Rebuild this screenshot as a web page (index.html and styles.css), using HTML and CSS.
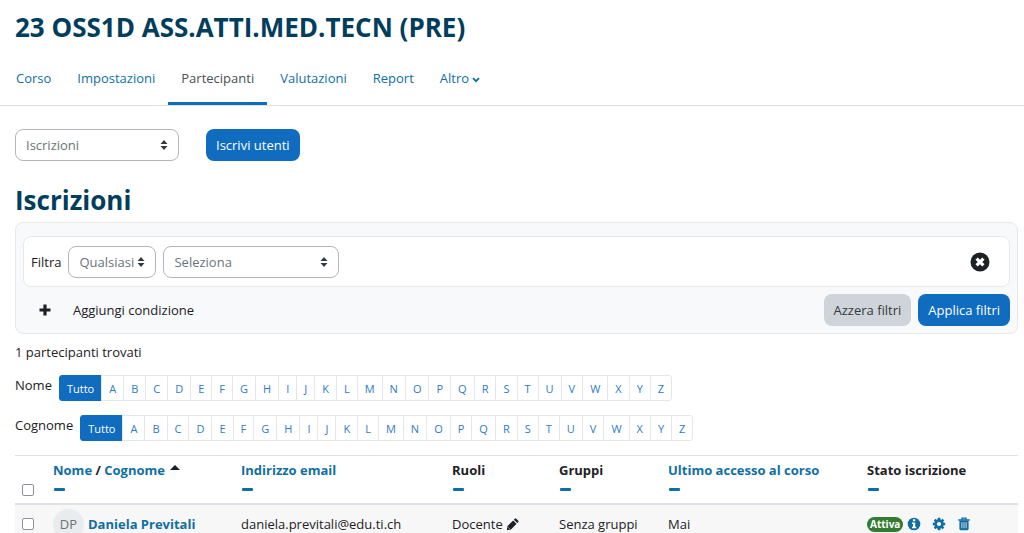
FILE: index.html
```html
<!DOCTYPE html>
<html lang="it">
<head>
    <meta charset="UTF-8">
    <meta name="viewport" content="width=device-width, initial-scale=1.0">
    <title>23 OSS1D ASS.ATTI.MED.TECN (PRE)</title>
    <link rel="stylesheet" href="styles.css">
</head>
<body>
    <header class="page-header">
        <h1>23 OSS1D ASS.ATTI.MED.TECN (PRE)</h1>
    </header>

    <nav class="tabs">
        <a href="#">Corso</a>
        <a href="#">Impostazioni</a>
        <a href="#" class="active">Partecipanti</a>
        <a href="#">Valutazioni</a>
        <a href="#">Report</a>
        <a href="#">Altro <svg class="caret" viewBox="0 0 8 6"><path d="M1 1.2l3 3 3-3" fill="none" stroke="currentColor" stroke-width="1.8"/></svg></a>
    </nav>

    <main>
        <div class="toolbar">
            <select class="select select-page" aria-label="Navigazione partecipanti">
                <option>Iscrizioni</option>
            </select>
            <button type="button" class="btn btn-primary">Iscrivi utenti</button>
        </div>

        <h2>Iscrizioni</h2>

        <form class="filters">
            <div class="filter-row">
                <label for="filter-match">Filtra</label>
                <select class="select select-match" id="filter-match">
                    <option>Qualsiasi</option>
                </select>
                <select class="select select-type" aria-label="Tipo di filtro">
                    <option>Seleziona</option>
                </select>
                <button type="button" class="icon-btn remove" aria-label="Rimuovi filtro">
                    <svg viewBox="0 0 20 20"><circle cx="10" cy="10" r="9.5" fill="#1d2125"/><path d="M6.6 6.6l6.8 6.8M13.4 6.6l-6.8 6.8" stroke="#fff" stroke-width="3.2"/></svg>
                </button>
            </div>
            <div class="filter-actions">
                <button type="button" class="icon-btn add">
                    <svg viewBox="0 0 12 12"><path d="M6 .5v11M.5 6h11" stroke="#1d2125" stroke-width="3.2"/></svg>
                    Aggiungi condizione
                </button>
                <button type="reset" class="btn btn-secondary">Azzera filtri</button>
                <button type="button" class="btn btn-primary">Applica filtri</button>
            </div>
        </form>

        <p class="count">1 partecipanti trovati</p>

        <div class="initials">
            <span>Nome</span>
            <div class="letters"></div>
        </div>
        <div class="initials">
            <span>Cognome</span>
            <div class="letters"></div>
        </div>

        <table>
            <colgroup>
                <col class="col-check">
                <col class="col-name">
                <col>
                <col class="col-roles">
                <col class="col-groups">
                <col class="col-access">
                <col class="col-status">
            </colgroup>
            <thead>
                <tr>
                    <th class="check"><input type="checkbox" aria-label="Seleziona tutti"></th>
                    <th><a href="#">Nome</a> / <a href="#">Cognome</a> <svg class="sort" viewBox="0 0 10 5"><path d="M0 5l5-5 5 5z" fill="#1d2125"/></svg><a href="#" class="hide" aria-label="Nascondi Nome"></a></th>
                    <th><a href="#">Indirizzo email</a><a href="#" class="hide" aria-label="Nascondi Indirizzo email"></a></th>
                    <th>Ruoli<a href="#" class="hide" aria-label="Nascondi Ruoli"></a></th>
                    <th>Gruppi<a href="#" class="hide" aria-label="Nascondi Gruppi"></a></th>
                    <th><a href="#">Ultimo accesso al corso</a><a href="#" class="hide" aria-label="Nascondi Ultimo accesso"></a></th>
                    <th>Stato iscrizione<a href="#" class="hide" aria-label="Nascondi Stato iscrizione"></a></th>
                </tr>
            </thead>
            <tbody>
                <tr>
                    <td class="check"><input type="checkbox" aria-label="Seleziona Daniela Previtali"></td>
                    <td><a href="#" class="user"><span class="avatar">DP</span>Daniela Previtali</a></td>
                    <td>daniela.previtali@edu.ti.ch</td>
                    <td>Docente <svg class="pencil" viewBox="0 0 14 14"><path d="M.8 13.2l.9-4.600 6-6 3.700 3.700-6 6z" fill="#1d2125"/><path d="M8.500 1.800l1-1c.5-.5 1.100-.5 1.600 0l2.100 2.100c.5.5.5 1.100 0 1.600l-1 1z" fill="#1d2125"/><path d="M2.600 10.200l1.200 1.200" stroke="#f7f7f7" stroke-width=".9"/></svg></td>
                    <td>Senza gruppi</td>
                    <td>Mai</td>
                    <td>
                        <div class="status">
                            <span class="badge">Attiva</span>
                            <a href="#" aria-label="Dettagli iscrizione"><svg viewBox="0 0 14 14"><circle cx="7" cy="7" r="6.300" fill="#0f6fa3"/><path d="M5.900 2.300h2.300v2H5.900zM5 5.500h3.200v4.300h1v1.500H5V9.800h1V7H5z" fill="#fff"/></svg></a>
                            <a href="#" aria-label="Modifica iscrizione"><svg viewBox="0 0 14 14"><circle cx="7" cy="7" r="4.800" fill="#0f6fa3"/><path d="M7 .8v12.400M.8 7h12.400M2.600 2.600l8.800 8.800M11.400 2.600l-8.800 8.800" stroke="#0f6fa3" stroke-width="2.600"/><circle cx="7" cy="7" r="2.100" fill="#f7f7f7"/></svg></a>
                            <a href="#" aria-label="Disiscrivi"><svg viewBox="0 0 14 14"><path d="M5 2.500V1.200h4v1.300M1.300 3h11.400" fill="none" stroke="#0f6fa3" stroke-width="1.300"/><path d="M2.400 3.500h9.200v8.300c0 .9-.5 1.400-1.200 1.400H3.600c-.7 0-1.200-.5-1.200-1.400z" fill="#0f6fa3"/><path d="M4.900 5.200v6M7 5.200v6M9.100 5.200v6" stroke="#f7f7f7" stroke-width=".8"/></svg></a>
                        </div>
                    </td>
                </tr>
            </tbody>
        </table>
    </main>

    <script>
        // Fill both initials bars
        const letters = 'ABCDEFGHIJKLMNOPQRSTUVWXYZ'.split('');

        document.querySelectorAll('.letters').forEach(bar => {
            bar.innerHTML = '<a href="#" class="active">Tutto</a>' +
                letters.map(letter => `<a href="#">${letter}</a>`).join('');
        });
    </script>
</body>
</html>
```
FILE: styles.css
```css
* {
    box-sizing: border-box;
}
body {
    font-family: 'Open Sans', 'Noto Sans', sans-serif;
    font-size: 13px;
    line-height: 20px;
    color: #1d2125;
    background: #fff;
    margin: 0;
}
a {
    color: #0f6fa3;
    text-decoration: none;
}
h1,
h2 {
    color: #003e5c;
    font-size: 26px;
    font-weight: 700;
    line-height: 32px;
    margin: 0;
}
.page-header {
    padding: 11px 15px 8px;
}
.tabs {
    display: flex;
    padding: 0 3px;
    border-bottom: 1px solid #dee2e6;
}
.tabs a {
    padding: 17px 13px 14px;
    border-bottom: 3px solid transparent;
}
.tabs .active {
    color: #495057;
    border-bottom-color: #0f6cbf;
}
.caret {
    width: 8px;
    height: 6px;
    vertical-align: middle;
}
main {
    padding: 23px 6px 0 15px;
}
.toolbar {
    display: flex;
    gap: 27px;
    margin-bottom: 23px;
}
.select {
    appearance: none;
    height: 32px;
    padding: 0 10px;
    font: inherit;
    color: #6a737b;
    border: 1px solid #b3b6c0;
    border-radius: 8px;
    background: #fff url("data:image/svg+xml,%3Csvg xmlns='http://www.w3.org/2000/svg' viewBox='0 0 8 10'%3E%3Cpath d='M4 0l3.500 4h-7zM4 10L.5 6h7z' fill='%23343a40'/%3E%3C/svg%3E") no-repeat right 10px center / 8px 10px;
}
.select-page {
    width: 164px;
}
.select-match {
    width: 88px;
}
.select-type {
    width: 176px;
}
.btn {
    height: 32px;
    padding: 0 10px;
    font: inherit;
    border: 0;
    border-radius: 8px;
}
.btn-primary {
    color: #fff;
    background: #0f6cbf;
}
.btn-secondary {
    color: #343a40;
    background: #ced4da;
}
.filters {
    margin-top: 6px;
    padding: 13px 7px 7px;
    background: #f8f9fa;
    border: 1px solid #e6e9ec;
    border-radius: 8px;
}
.filter-row {
    display: flex;
    align-items: center;
    gap: 7px;
    height: 51px;
    padding: 0 7px;
    background: #fff;
    border: 1px solid #e6e9ec;
    border-radius: 8px;
}
/* drop the margins the browser puts on form controls */
.select,
.btn,
.icon-btn {
    margin: 0;
}
.icon-btn {
    padding: 0;
    font: inherit;
    color: inherit;
    border: 0;
    background: none;
}
.icon-btn.remove {
    margin: 0 12px 0 auto;
}
.remove svg {
    display: block;
    width: 20px;
    height: 20px;
}
.filter-actions {
    display: flex;
    gap: 7px;
    margin-top: 7px;
}
.icon-btn.add {
    display: flex;
    align-items: center;
    gap: 22px;
    margin-right: auto;
    padding-left: 16px;
}
.add svg {
    width: 12px;
    height: 12px;
}
.count {
    margin: 8px 0 13px;
}
.initials {
    display: flex;
    gap: 7px;
    margin-bottom: 14px;
}
.letters {
    display: flex;
    font-size: 11px;
    line-height: 23px;
}
.letters a {
    margin-left: -1px;
    padding: 1px 7px 0;
    color: #2f7cc6;
    border: 1px solid #e4e7ea;
}
.letters .active {
    margin-left: 0;
    color: #fff;
    background: #0f6cbf;
    border-color: #0f6cbf;
    border-radius: 3px 0 0 3px;
}
.letters a:last-child {
    border-radius: 0 3px 3px 0;
}
table {
    width: 100%;
    table-layout: fixed;
    border-collapse: collapse;
}
.col-check {
    width: 31px;
}
.col-name {
    width: 188px;
}
.col-roles {
    width: 107px;
}
.col-groups {
    width: 109px;
}
.col-access {
    width: 199px;
}
.col-status {
    width: 158px;
}
th,
td {
    padding: 4px 7px;
    text-align: left;
    white-space: nowrap;
    border-top: 1px solid #dee2e6;
}
th {
    height: 48px;
    vertical-align: top;
    border-bottom: 2px solid #dee2e6;
}
td {
    height: 40px;
    background: #f7f7f7;
}
th.check {
    padding-bottom: 7px;
    vertical-align: bottom;
}
input[type="checkbox"] {
    display: block;
    appearance: none;
    width: 12px;
    height: 12px;
    margin: 0;
    border: 1px solid #8f8f9d;
    border-radius: 2px;
    background: #fff;
}
.sort {
    width: 10px;
    height: 5px;
    margin-left: 2px;
    vertical-align: 5px;
}
.hide {
    display: block;
    width: 11px;
    height: 3px;
    margin: 8px 0 0 1px;
    border-radius: 1px;
    background: #0f6fa3;
}
.user {
    display: flex;
    align-items: center;
    gap: 4px;
    font-weight: 700;
}
.avatar {
    width: 31px;
    height: 31px;
    line-height: 31px;
    font-weight: 400;
    text-align: center;
    color: #6a737b;
    background: #e9ecef;
    border-radius: 50%;
}
.pencil {
    width: 13px;
    height: 13px;
    vertical-align: -2px;
}
.status {
    display: flex;
    align-items: center;
}
.status a {
    display: flex;
    margin-right: 11px;
}
.status svg {
    width: 14px;
    height: 14px;
}
.badge {
    margin-right: 4px;
    padding: 0 3px;
    font-size: 10px;
    line-height: 15px;
    font-weight: 700;
    color: #fff;
    background: #357a32;
    border-radius: 8px;
}
```
